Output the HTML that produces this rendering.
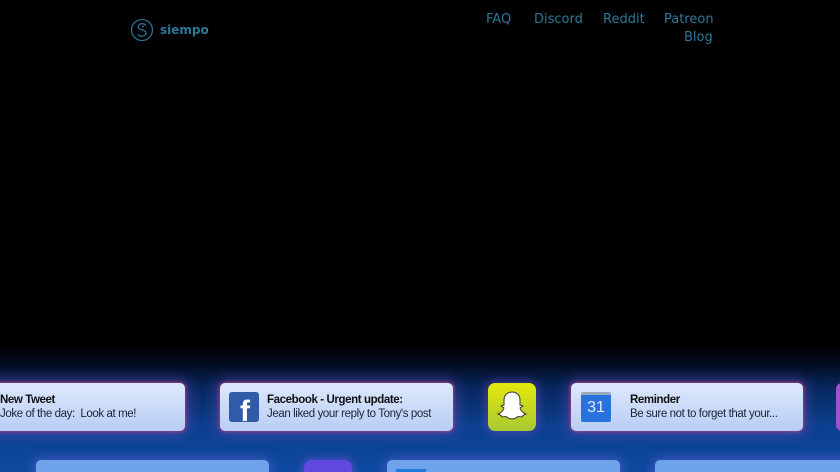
<!DOCTYPE html>
<html><head><style>
*{margin:0;padding:0;box-sizing:border-box}
html,body{width:840px;height:472px;overflow:hidden}
body{background:#000;font-family:"Liberation Sans",sans-serif;position:relative}
.bg{position:absolute;left:0;top:345px;width:840px;height:127px;background:linear-gradient(#000 0px,#020a1c 18px,#08275e 42px,#0c3f8e 80px,#0e4aa0 127px)}
.nav{position:absolute;color:#2d7898;font-family:"DejaVu Sans",sans-serif;font-size:13px}
.card{position:absolute;height:48px;border-radius:5px;background:linear-gradient(#dde8fc,#b9cdf5);box-shadow:0 0 3px 1px rgba(200,60,110,.7),0 0 14px 3px rgba(120,80,200,.5)}
.t{position:absolute;left:47px;top:10px;font-size:11.5px;line-height:14px;color:#1a2436;letter-spacing:-.4px}
.t b{display:block;font-weight:bold;color:#111}
.card2{position:absolute;top:460px;height:20px;border-radius:5px;background:#6ea3ec;box-shadow:0 0 10px 2px rgba(120,100,230,.5)}
</style></head><body>
<div class="bg"></div>
<svg style="position:absolute;left:130px;top:18px" width="24" height="24" viewBox="0 0 24 24" fill="none" stroke="#2a7090" stroke-width="1.3"><circle cx="12" cy="12" r="10.5"/><path d="M16 7.5c-1-1.2-2.5-1.8-4-1.8-2.2 0-3.8 1.3-3.8 3 0 4 7.8 2.3 7.8 6.3 0 1.8-1.7 3.2-4 3.2-1.6 0-3-.6-4-1.8"/><path d="M14 9c-.6-.5-1.3-.8-2-.8"/></svg>
<div class="nav" style="left:160px;top:23px;font-size:12px;font-weight:bold">siempo</div>
<div class="nav" style="left:486px;top:12px">FAQ</div>
<div class="nav" style="left:534px;top:12px">Discord</div>
<div class="nav" style="left:603px;top:12px">Reddit</div>
<div class="nav" style="left:664px;top:12px">Patreon</div>
<div class="nav" style="left:684px;top:30px">Blog</div>

<div class="card" style="left:-20px;top:383px;width:205px"><div class="t" style="left:20px">
<b>New Tweet</b>Joke of the day:&nbsp; Look at me!</div></div>
<div class="card" style="left:220px;top:383px;width:233px">
<div style="position:absolute;left:9px;top:9px;width:30px;height:30px;background:#2f5ba8;border-radius:3px;overflow:hidden"><span style="position:absolute;left:11px;top:3px;color:#fff;font-weight:bold;font-size:30px;font-family:'Liberation Sans'">f</span></div>
<div class="t"><b>Facebook - Urgent update:</b>Jean liked your reply to Tony's post</div></div>
<div style="position:absolute;left:488px;top:383px;width:48px;height:48px;border-radius:7px;background:linear-gradient(#e4e80a,#a8c834);box-shadow:0 0 10px 2px rgba(130,80,200,.5)">
<svg width="48" height="48" viewBox="0 0 48 48"><path d="M24 9c-5 0-8 3.5-8 8v5l-3 1 3 2c-1 3-3 5-6 6l3 1.5 1 1.5 4-.5c2 1.5 4 2.5 6 2.5s4-1 6-2.5l4 .5 1-1.5 3-1.5c-3-1-5-3-6-6l3-2-3-1v-5c0-4.5-3-8-8-8z" fill="#fff" stroke="#333" stroke-width="1"/></svg></div>
<div class="card" style="left:571px;top:383px;width:232px">
<div style="position:absolute;left:10px;top:9px;width:30px;height:30px;background:#2a73de;border-radius:2px;border-top:3px solid #9ab;color:#dfe9ff;font-size:16px;text-align:center;line-height:26px">31</div>
<div class="t" style="left:59px"><b>Reminder</b>Be sure not to forget that your...</div></div>
<div style="position:absolute;left:836px;top:383px;width:20px;height:48px;border-radius:6px;background:#a050d0"></div>
<div class="card2" style="left:36px;width:233px"></div>
<div style="position:absolute;left:304px;top:460px;width:48px;height:20px;border-radius:8px;background:#6048e0;box-shadow:0 0 8px 2px rgba(130,80,230,.5)"></div>
<div class="card2" style="left:387px;width:233px"><div style="position:absolute;left:9px;top:9px;width:30px;height:10px;background:#1f7ad8"></div></div>
<div class="card2" style="left:655px;width:200px"></div>
</body></html>
